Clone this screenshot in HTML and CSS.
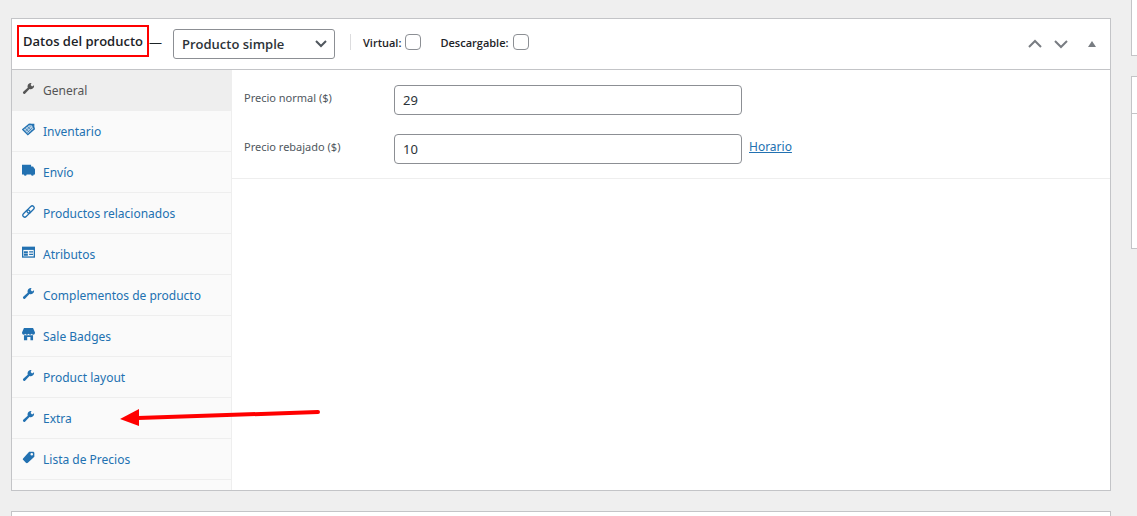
FILE: index.html
```html
<!DOCTYPE html>
<html lang="es">
<head>
  <meta charset="UTF-8">
  <meta name="viewport" content="width=device-width, initial-scale=1.0">
  <title>Datos del producto</title>
  <link rel="stylesheet" href="styles.css">
</head>
<body>

<!-- shared icons -->
<svg class="sprite" aria-hidden="true">
  <symbol id="wrench" viewBox="0 0 20 20">
    <path d="M18.500 5c.3 2-.3 3.600-1.600 4.700-1.500 1.300-3.400 1.600-5.400 1L5 17.500c-1 1-2.200 1-3 .2s-.7-2 .3-3l6.500-6C8.200 6.500 8.600 4.600 10 3.100c1.200-1.300 2.800-1.900 4.600-1.600l-1.300 3.300 2.200 2z"/>
  </symbol>
</svg>

<div class="page">
  <main class="main">
    <section class="panel product-data">
      <header class="panel-header">
        <h2 class="title">Datos del producto</h2>
        <span class="dash">—</span>
        <div class="options">
          <div class="select-wrap">
            <select class="type-select" aria-label="Tipo de producto">
              <option>Producto simple</option>
            </select>
            <svg class="select-arrow" width="12" height="8" viewBox="0 0 12 8"><path d="M1 1l5 5 5-5"/></svg>
          </div>
          <label class="check first">Virtual: <input type="checkbox"></label>
          <label class="check">Descargable: <input type="checkbox"></label>
        </div>
        <div class="handles">
          <button class="handle" type="button" aria-label="Subir">
            <svg width="14" height="10" viewBox="0 0 14 10"><path class="line" d="M1 8l6-6 6 6"/></svg>
          </button>
          <button class="handle" type="button" aria-label="Bajar">
            <svg width="14" height="10" viewBox="0 0 14 10"><path class="line" d="M1 2l6 6 6-6"/></svg>
          </button>
          <button class="handle toggle" type="button" aria-label="Alternar panel">
            <svg width="8" height="6" viewBox="0 0 8 6"><path d="M4 0l4 6H0z"/></svg>
          </button>
        </div>
      </header>

      <div class="panel-body">
        <nav class="tabs">
          <a class="tab active" href="#"><svg class="icon" viewBox="0 0 20 20"><use href="#wrench"/></svg>General</a>
          <a class="tab" href="#"><svg class="icon" viewBox="0 0 20 20"><path class="outline" d="M11 2L1 10l8 8 10-9-3-6z"/><path class="stroke thin" d="M8 5l7 7M5 8l7 7M5 13l8-8M8 15l8-8"/><path d="M12 1h7v7l-2-1V3h-5z"/></svg>Inventario</a>
          <a class="tab" href="#"><svg class="icon" viewBox="0 0 20 20"><path d="M0 1h14v3h3l3 4v8H0z"/><circle cx="5" cy="16" r="2"/><circle cx="16" cy="16" r="2"/></svg>Envío</a>
          <a class="tab" href="#"><svg class="icon" viewBox="0 0 20 20"><g class="stroke" transform="rotate(-45 10 10)"><rect x="-1" y="7" width="13" height="6" rx="3"/><rect x="8" y="7" width="13" height="6" rx="3"/></g></svg>Productos relacionados</a>
          <a class="tab" href="#"><svg class="icon" viewBox="0 0 20 20"><path d="M0 1h20v17H0z"/><path class="hole" d="M2 6h16v10H2z"/><path d="M3 8h6v3H3zM3 12h6v3H3zM11 8h6v2h-6zM11 12h6v2h-6z"/></svg>Atributos</a>
          <a class="tab" href="#"><svg class="icon" viewBox="0 0 20 20"><use href="#wrench"/></svg>Complementos de producto</a>
          <a class="tab" href="#"><svg class="icon" viewBox="0 0 20 20"><path d="M3 0h14l3 7c0 4-4 4-5 2-1 2-4 2-5 0-1 2-4 2-5 0-1 2-5 2-5-2zM3 11h14v8h-4v-5H8v5H3z"/></svg>Sale Badges</a>
          <a class="tab" href="#"><svg class="icon" viewBox="0 0 20 20"><use href="#wrench"/></svg>Product layout</a>
          <a class="tab" href="#"><svg class="icon" viewBox="0 0 20 20"><use href="#wrench"/></svg>Extra</a>
          <a class="tab" href="#"><svg class="icon" viewBox="0 0 20 20"><path fill-rule="evenodd" d="M11 1h6c1 0 2 1 2 2v6L9 18c-1 1-2 1-3 0l-4-4c-1-1-1-2 0-3zM15 3a2 2 0 1 0 0 4 2 2 0 0 0 0-4z"/></svg>Lista de Precios</a>
        </nav>

        <div class="fields">
          <div class="field">
            <label for="regular_price">Precio normal ($)</label>
            <input type="text" id="regular_price" value="29">
          </div>
          <div class="field">
            <label for="sale_price">Precio rebajado ($)</label>
            <input type="text" id="sale_price" value="10">
            <a href="#">Horario</a>
          </div>
        </div>
      </div>

      <!-- arrow pointing at the Extra tab -->
      <svg class="arrow" width="202" height="20" viewBox="0 0 202 20" aria-hidden="true">
        <path class="arrow-line" d="M18 10L198 4"/>
        <path d="M0 11l19-10v17z"/>
      </svg>
    </section>

    <section class="panel next"></section>
  </main>

  <aside class="side">
    <div class="side-box top"></div>
    <div class="side-box"><div class="side-header"></div></div>
  </aside>
</div>

</body>
</html>
```

FILE: styles.css
```css
* {
  box-sizing: border-box;
}

body {
  margin: 0;
  background: #efefef;
  color: #1d2327;
  font-family: "Noto Sans", "Open Sans", sans-serif;
  font-size: 12px;
}

a {
  color: #2271b1;
}

.sprite {
  display: none;
}

.page {
  display: grid;
  grid-template-columns: minmax(0, 1fr) 6px;
  gap: 20px;
  min-height: 100vh;
  padding-left: 11px;
}

.main {
  display: flex;
  flex-direction: column;
  gap: 20px;
  padding-top: 18px;
}

.panel {
  background: #fff;
  border: 1px solid #c3c4c7;
}

.next {
  flex: 1;
  border-bottom: 0;
}

.product-data {
  position: relative;
}

/* header */

.panel-header {
  display: flex;
  align-items: flex-start;
  padding: 6px 14px 6px 5px;
  border-bottom: 1px solid #c3c4c7;
  font-family: "Open Sans", "Noto Sans", sans-serif;
  font-size: 13px;
}

.title {
  margin: 0;
  padding: 0 4px;
  border: 2px solid #f00;
  font-size: 13px;
  font-weight: 600;
  line-height: 28px;
}

.dash {
  line-height: 34px;
}

.options {
  display: flex;
  align-items: flex-start;
  margin-left: 11px;
  padding-top: 4px;
}

.select-wrap {
  position: relative;
}

.type-select {
  appearance: none;
  display: block;
  width: 162px;
  height: 30px;
  padding: 0 24px 0 8px;
  border: 1px solid #8c8f94;
  border-radius: 3px;
  background: #fff;
  color: #2c3338;
  font-family: inherit;
  font-size: 13px;
  font-weight: 600;
}

.select-arrow {
  position: absolute;
  top: 11px;
  right: 8px;
  fill: none;
  stroke: #50575e;
  stroke-width: 2;
  pointer-events: none;
}

.check {
  display: flex;
  align-items: center;
  gap: 4px;
  height: 26px;
  margin-left: 19px;
  font-size: 11px;
  font-weight: 600;
}

.first {
  margin-left: 15px;
}

.first::before {
  content: "";
  width: 1px;
  height: 16px;
  margin-right: 8px;
  background: #dcdcde;
}

.check input {
  appearance: none;
  width: 16px;
  height: 16px;
  margin: 0;
  border: 1px solid #8c8f94;
  border-radius: 4px;
  background: #fff;
}

.handles {
  display: flex;
  align-items: center;
  gap: 12px;
  height: 38px;
  margin-left: auto;
}

.handle {
  display: flex;
  padding: 0;
  border: 0;
  background: none;
  fill: #787c82;
}

.toggle {
  margin-left: 8px;
}

.line {
  fill: none;
  stroke: #787c82;
  stroke-width: 2;
}

/* body */

.panel-body {
  display: flex;
}

.tabs {
  flex: 0 0 220px;
  padding-bottom: 10px;
  border-right: 1px solid #eee;
  background: #fafafa;
}

.tab {
  display: flex;
  align-items: center;
  gap: 8px;
  height: 41px;
  padding-left: 10px;
  border-bottom: 1px solid #eee;
  text-decoration: none;
}

.active {
  background: #eee;
  color: #555;
}

.icon {
  width: 13px;
  height: 13px;
  margin-bottom: 4px;
  fill: currentColor;
}

.stroke {
  fill: none;
  stroke: currentColor;
  stroke-width: 2;
}

.thin {
  stroke-width: 1;
}

.outline {
  fill: #b5cfe5;
  stroke: currentColor;
  stroke-width: 2;
}

.hole {
  fill: #fafafa;
}

.fields {
  flex: 1;
  align-self: flex-start;
  display: flex;
  flex-direction: column;
  gap: 19px;
  padding: 15px 12px 14px;
  border-bottom: 1px solid #eee;
}

.field {
  display: flex;
  align-items: flex-start;
  line-height: 25px;
}

.field label {
  flex: 0 0 150px;
  color: #50575e;
  font-size: 11px;
}

.field input {
  flex: 0 1 348px;
  min-width: 0;
  height: 30px;
  padding: 0 8px;
  border: 1px solid #8c8f94;
  border-radius: 4px;
  background: #fff;
  color: #2c3338;
  font-family: inherit;
  font-size: 13px;
}

.field a {
  margin-left: 7px;
}

.arrow {
  position: absolute;
  top: 389px;
  left: 108px;
  fill: #f00;
  pointer-events: none;
}

.arrow-line {
  stroke: #f00;
  stroke-width: 4;
  stroke-linecap: round;
}

/* side column */

.side {
  display: flex;
  flex-direction: column;
  gap: 20px;
}

.side-box {
  height: 173px;
  border: 1px solid #c3c4c7;
  border-right: 0;
  background: #fff;
}

.top {
  height: 56px;
  border-top: 0;
}

.side-header {
  height: 37px;
  border-bottom: 1px solid #c3c4c7;
}
```
